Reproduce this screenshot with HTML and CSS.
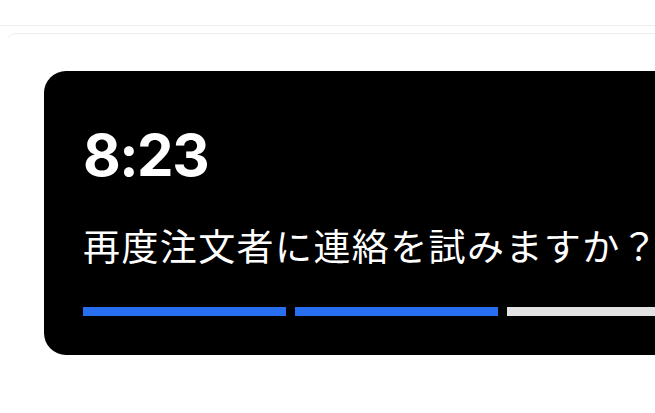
FILE: index.html
```html
<!DOCTYPE html>
<html lang="ja">
<head>
<meta charset="utf-8">
<title>Timer</title>
<link rel="stylesheet" href="styles.css">
</head>
<body>
<div class="topbar"></div>
<div class="panel">
  <div class="card">
    <div class="time">8:23</div>
    <div class="question">再度注文者に連絡を試みますか？</div>
    <div class="progress">
      <span class="seg on"></span>
      <span class="seg on"></span>
      <span class="seg"></span>
      <span class="seg"></span>
    </div>
  </div>
</div>
</body>
</html>
```
FILE: styles.css
```css
html, body {
  margin: 0;
  padding: 0;
  background: #fff;
  overflow: hidden;
  width: 655px;
  height: 413px;
}
.topbar {
  height: 25px;
  border-bottom: 1px solid #eeeeee;
  width: 1200px;
}
.panel {
  margin: 7px 0 0 6px;
  width: 1100px;
  border-top: 1px solid #ececec;
  border-top-left-radius: 10px;
  padding: 37px 0 58px 38px;
}
.card {
  background: #000;
  color: #fff;
  border-radius: 22px;
  width: 900px;
  height: 284px;
  box-sizing: border-box;
  padding: 52px 0 0 39px;
  font-family: Inter, "Noto Sans", sans-serif;
}
.time {
  font-size: 58px;
  font-weight: 700;
  letter-spacing: -1.5px;
  line-height: 64px;
}
.question {
  margin-top: 36px;
  font-family: "Noto Sans CJK JP", "Noto Sans", sans-serif;
  font-size: 37px;
  font-weight: 400;
  line-height: 44px;
  white-space: nowrap;
  letter-spacing: 1.4px;
}
.progress {
  margin-top: 40px;
  display: flex;
  gap: 9px;
}
.seg {
  width: 203px;
  height: 9px;
  background: #e2e2e2;
}
.seg.on {
  background: #276ef1;
}
```
